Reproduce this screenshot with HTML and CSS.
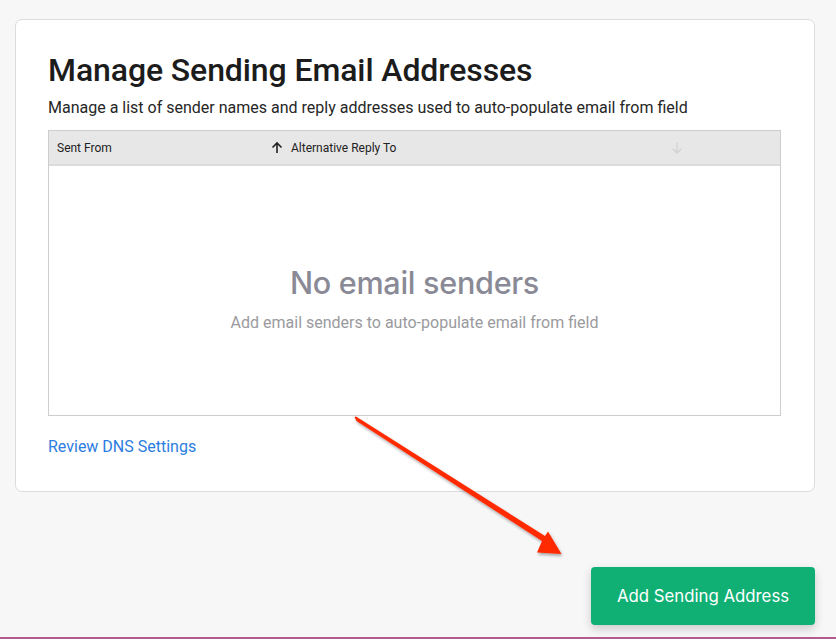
FILE: index.html
```html
<!DOCTYPE html>
<html>
<head>
<meta charset="utf-8">
<link rel="stylesheet" href="styles.css">
</head>
<body>
<div class="page">
  <section class="card">
    <h1 class="title">Manage Sending Email Addresses</h1>
    <p class="subtitle">Manage a list of sender names and reply addresses used to auto-populate email from field</p>
    <div class="table">
      <div class="thead">
        <div class="th th-from">Sent From</div>
        <div class="th th-reply">
          <svg class="sort-icon" width="14" height="14" viewBox="0 0 14 14"><path d="M7 12V2M2.5 6.5L7 2l4.5 4.5" fill="none" stroke="#222" stroke-width="1.6"/></svg>
          <span>Alternative Reply To</span>
        </div>
        <div class="th th-sort">
          <svg width="12" height="14" viewBox="0 0 12 14"><path d="M6 1.5v10.5M1.8 7.8L6 12l4.2-4.2" fill="none" stroke="#d2d2d2" stroke-width="1.3"/></svg>
        </div>
      </div>
      <div class="empty">
        <div class="empty-title">No email senders</div>
        <div class="empty-text">Add email senders to auto-populate email from field</div>
      </div>
    </div>
    <a class="link" href="#">Review DNS Settings</a>
  </section>
  <div class="actions">
    <button class="btn">Add Sending Address</button>
  </div>
  <div class="bottom-bar"></div>
  <svg class="annotation" width="836" height="639" viewBox="0 0 836 639">
    <defs>
      <filter id="sh" x="-20%" y="-20%" width="140%" height="140%">
        <feDropShadow dx="1" dy="2" stdDeviation="1.5" flood-color="#000" flood-opacity="0.35"/>
      </filter>
    </defs>
    <polygon filter="url(#sh)" fill="#ff2a00" points="354.5,417 356.5,421 542,541 537,552.5 561.5,554 548,531.5 545,536 356,416.5"/>
  </svg>
</div>
</body>
</html>
```

FILE: styles.css
```css
* { box-sizing: border-box; }
html, body { margin: 0; padding: 0; }
body {
  background: #f7f7f7;
  font-family: Roboto, "Liberation Sans", sans-serif;
  color: #1f1f1f;
  width: 836px;
  height: 639px;
  overflow: hidden;
}
.page {
  position: relative;
  height: 639px;
  padding-top: 19px;
}
.card {
  margin-left: 15px;
  width: 800px;
  height: 473px;
  background: #fff;
  border: 1px solid #dcdcdc;
  border-radius: 7px;
  padding: 31px 33px 0 32px;
}
.title {
  margin: 0;
  font-size: 32px;
  font-weight: 500;
  line-height: 38px;
  color: #1c1c1c;
  letter-spacing: -0.1px;
}
.subtitle {
  margin: 9px 0 0;
  font-size: 16px;
  line-height: 20px;
  color: #262626;
}
.table {
  margin-top: 12px;
  border: 1px solid #cdcdcd;
  height: 286px;
  display: flex;
  flex-direction: column;
}
.thead {
  height: 35px;
  flex: none;
  background: #e7e7e7;
  border-bottom: 2px solid #dcdcdc;
  display: flex;
  align-items: center;
  font-size: 12px;
  color: #222;
}
.th-from { width: 221px; padding-left: 8px; }
.th-reply { display: flex; align-items: center; gap: 7px; width: 401px; }
.sort-icon { display: block; }
.th-sort { display: flex; align-items: center; }
.th-sort svg { display: block; }
.empty {
  flex: 1;
  display: flex;
  flex-direction: column;
  align-items: center;
  justify-content: center;
  padding-top: 16px;
}
.empty-title {
  font-family: Inter, sans-serif;
  font-size: 30.6px;
  font-weight: 500;
  color: #898a96;
  line-height: 36px;
  letter-spacing: -0.3px;
}
.empty-text {
  margin-top: 12px;
  font-family: Roboto, sans-serif;
  font-size: 16px;
  color: #9a9a9e;
}
.link {
  display: inline-block;
  margin-top: 21px;
  font-size: 16px;
  color: #2b7de0;
  text-decoration: none;
}
.actions {
  display: flex;
  justify-content: flex-end;
  padding-right: 21px;
  margin-top: 75px;
}
.btn {
  width: 224px;
  height: 58px;
  border: none;
  border-radius: 4px;
  background: #10b075;
  color: #fff;
  font-family: Inter, sans-serif;
  font-size: 16.8px;
  box-shadow: 0 4px 10px rgba(0,0,0,0.18);
}
.bottom-bar {
  position: absolute;
  left: 0;
  right: 0;
  bottom: 0;
  height: 2px;
  background: #b35a90;
}
.annotation {
  position: absolute;
  left: 0;
  top: 0;
  pointer-events: none;
}
```
